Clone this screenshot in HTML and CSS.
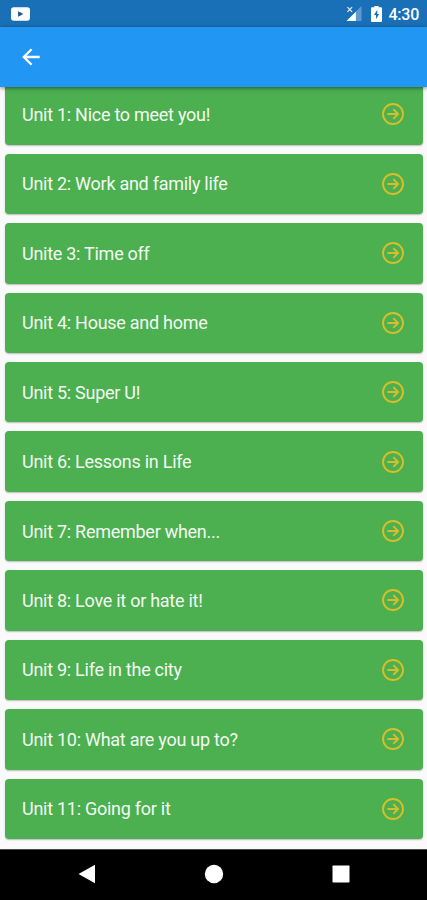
FILE: index.html
```html
<!DOCTYPE html>
<html lang="en">
<head>
<meta charset="utf-8">
<title>Units</title>
<link rel="stylesheet" href="styles.css">
</head>
<body>
<svg class="defs" aria-hidden="true">
  <symbol id="go" viewBox="0 0 24 24">
    <circle cx="12" cy="12" r="10" />
    <path d="M6.400 12H17M12.300 7.200l4.800 4.800-4.800 4.800" />
  </symbol>
</svg>
<div class="screen">
  <header class="status">
    <svg class="video" viewBox="0 0 20 14"><rect width="20" height="14" rx="3" fill="#fff"/><path d="M7.500 4.200v5.600L13 7z" fill="#1b5595"/></svg>
    <div class="indicators">
      <svg class="signal" viewBox="0 0 16 16"><path d="M16 0v16H0z" fill="#5e9bd0"/><path d="M10 6v10H0z" fill="#fff"/><path d="M1 1.200l5 5M6 1.200l-5 5" stroke="#e4effa" stroke-width="1.300"/></svg>
      <svg class="battery" viewBox="0 0 11 16"><path d="M3.300 0h4.400v1.300H10a1 1 0 0 1 1 1V15a1 1 0 0 1-1 1H1a1 1 0 0 1-1-1V2.300a1 1 0 0 1 1-1h2.300z" fill="#fff"/><path d="M6.300 3.800L3 9h2v4.200l3.100-5.200H6.300z" fill="#1b6eb5"/></svg>
      <span class="clock">4:30</span>
    </div>
  </header>
  <nav class="appbar">
    <svg class="back" viewBox="0 0 18 18"><path d="M17.700 9H2M9.600 1.200L1.800 9l7.800 7.800" fill="none" stroke="#fff" stroke-width="2.300"/></svg>
  </nav>
  <main class="list">
    <div class="card"><span>Unit 1: Nice to meet you!</span><svg class="go"><use href="#go"/></svg></div>
    <div class="card"><span>Unit 2: Work and family life</span><svg class="go"><use href="#go"/></svg></div>
    <div class="card"><span>Unite 3: Time off</span><svg class="go"><use href="#go"/></svg></div>
    <div class="card"><span>Unit 4: House and home</span><svg class="go"><use href="#go"/></svg></div>
    <div class="card"><span>Unit 5: Super U!</span><svg class="go"><use href="#go"/></svg></div>
    <div class="card"><span>Unit 6: Lessons in Life</span><svg class="go"><use href="#go"/></svg></div>
    <div class="card"><span>Unit 7: Remember when...</span><svg class="go"><use href="#go"/></svg></div>
    <div class="card"><span>Unit 8: Love it or hate it!</span><svg class="go"><use href="#go"/></svg></div>
    <div class="card"><span>Unit 9: Life in the city</span><svg class="go"><use href="#go"/></svg></div>
    <div class="card"><span>Unit 10: What are you up to?</span><svg class="go"><use href="#go"/></svg></div>
    <div class="card"><span>Unit 11: Going for it</span><svg class="go"><use href="#go"/></svg></div>
  </main>
  <footer class="navbar">
    <svg viewBox="0 0 20 20"><path d="M19 .8v18.400L2.500 10z"/></svg>
    <svg viewBox="0 0 20 20"><circle cx="10" cy="10" r="9.200"/></svg>
    <svg viewBox="0 0 20 20"><rect x="1.500" y="1.500" width="17" height="17" rx=".8"/></svg>
  </footer>
</div>
</body>
</html>
```
FILE: styles.css
```css
* { box-sizing: border-box; }
body { margin: 0; font-family: Roboto, sans-serif; }
.defs { display: none; }
.screen {
  width: 427px;
  height: 900px;
  display: flex;
  flex-direction: column;
  overflow: hidden;
  background: #fafafa;
}
.status {
  flex: none;
  height: 27px;
  padding: 0 8px 0 11px;
  display: flex;
  align-items: center;
  justify-content: space-between;
  background: #1a70b7;
}
.video { width: 19px; height: 14px; }
.indicators { display: flex; align-items: center; }
.signal { width: 16px; height: 15px; margin-right: 9px; }
.battery { width: 11px; height: 16px; margin-right: 7px; }
.clock { color: #fff; font-size: 16px; letter-spacing: -.25px; font-weight: 500; line-height: 27px; padding-top: 2px; }
.appbar {
  flex: none;
  height: 60px;
  padding-left: 22px;
  display: flex;
  align-items: center;
  background: #2196f3;
  box-shadow: 0 1px 4px rgba(0, 0, 0, .5);
  z-index: 1;
}
.back { width: 18px; height: 18px; }
.list {
  flex: 1;
  min-height: 0;
  overflow: hidden;
  padding: 0 4px 0 5px;
}
.card {
  height: 60.450px;
  margin-bottom: 9px;
  padding: 0 18px 0 17px;
  display: flex;
  align-items: center;
  justify-content: space-between;
  border-radius: 4px;
  background: #4caf50;
  box-shadow: 0 1px 1.500px rgba(0, 0, 0, .25);
  color: #f2faf2;
  font-size: 18px;
  letter-spacing: -.27px;
}
.card:first-child { margin-top: -2.800px; }
.go {
  width: 24px;
  height: 24px;
  fill: none;
  stroke: #d8be2a;
  stroke-width: 1.900;
}
.navbar {
  flex: none;
  height: 51px;
  padding: 0 76px 2px;
  display: flex;
  align-items: center;
  justify-content: space-between;
  background: #000;
  border-top: 1px solid #4a4a4a;
}
.navbar svg { width: 20px; height: 20px; fill: #fff; }
```
